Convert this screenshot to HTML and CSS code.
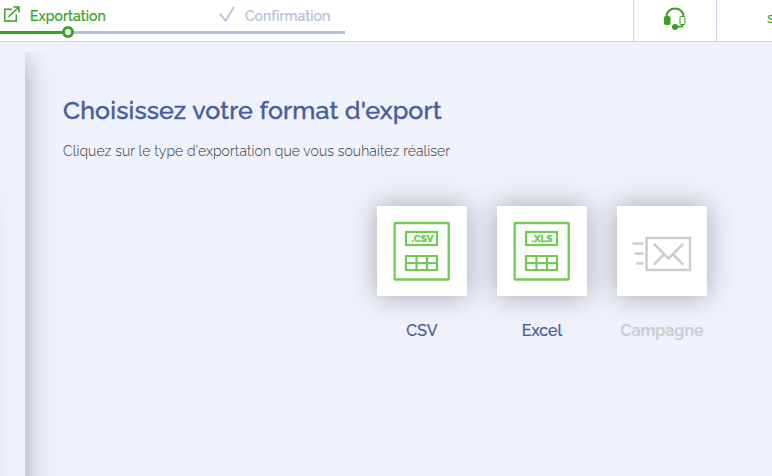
FILE: index.html
```
<!DOCTYPE html>
<html lang="fr">
<head>
<meta charset="utf-8">
<title>Exportation</title>
<link rel="stylesheet" href="styles.css">
</head>
<body>
<header class="topbar">
  <nav class="steps">
    <div class="step step-active">
      <svg class="step-icon" width="16" height="16" viewBox="0 0 16 16" fill="none" stroke="currentColor" stroke-width="1.500"><path d="M8 3.200H.8V15h11.500V8.500M4.500 10.800L14.500 1.500M9.500 1H15v5.500"/></svg>
      <span>Exportation</span>
      <i class="knob"></i>
    </div>
    <div class="step">
      <svg class="step-icon" width="16" height="16" viewBox="0 0 16 16" fill="none" stroke="currentColor" stroke-width="1.700"><path d="M.7 7.500L6.700 14.700L15 .7"/></svg>
      <span>Confirmation</span>
    </div>
  </nav>
  <div class="support">
    <svg width="24" height="24" viewBox="0 0 24 24" fill="none" stroke="currentColor"><path d="M3.500 10C3.500-1.500 20.500-1.500 20.500 10" stroke-width="2"/><rect x="1" y="9" width="6.500" height="9" rx="1.800" fill="currentColor" stroke="none"/><rect x="17" y="9.500" width="5" height="8" rx="1"/><path d="M19.500 17v1q0 1.700-2 1.700h-5" stroke-width="1.800"/><ellipse cx="12" cy="20" rx="3" ry="2.900" fill="currentColor" stroke="none"/></svg>
  </div>
  <div class="account">s</div>
</header>
<main class="workspace">
  <aside class="side"></aside>
  <section class="panel">
    <h1>Choisissez votre format d'export</h1>
    <p>Cliquez sur le type d'exportation que vous souhaitez réaliser</p>
    <div class="formats">
      <div class="format">
        <div class="tile"><svg width="90" height="90" viewBox="0 0 90 90" fill="none" stroke="#6fcc4f" stroke-width="2.200"><rect x="17.700" y="17" width="54" height="56.500" rx=".5" stroke-width="2.300"/><rect x="29" y="26" width="31" height="13"/><path d="M29 50h31v14H29zM29 57h31M39.500 50v14M50 50v14"/><text class="ext" x="34.500" y="36" textLength="22" lengthAdjust="spacingAndGlyphs">.CSV</text></svg></div>
        <span>CSV</span>
      </div>
      <div class="format">
        <div class="tile"><svg width="90" height="90" viewBox="0 0 90 90" fill="none" stroke="#6fcc4f" stroke-width="2.200"><rect x="17.700" y="17" width="54" height="56.500" rx=".5" stroke-width="2.300"/><rect x="29" y="26" width="31" height="13"/><path d="M29 50h31v14H29zM29 57h31M39.500 50v14M50 50v14"/><text class="ext" x="34.500" y="36" textLength="21" lengthAdjust="spacingAndGlyphs">.XLS</text></svg></div>
        <span>Excel</span>
      </div>
      <div class="format disabled">
        <div class="tile"><svg width="90" height="90" viewBox="0 0 90 90" fill="none" stroke="#cdcdcd" stroke-width="2.500" stroke-linecap="round" stroke-linejoin="round"><rect x="29.500" y="32" width="43.500" height="32"/><path d="M37.500 38.500L51.500 52.500L65.500 38.500M37.500 58L46.500 49M65.500 58L56.500 49M16.500 37.500h9M18.500 47.500h7M20.500 57.500h5"/></svg></div>
        <span>Campagne</span>
      </div>
    </div>
  </section>
</main>
</body>
</html>
```
FILE: styles.css
```
* { box-sizing: border-box; }
body {
  margin: 0;
  height: 476px;
  overflow: hidden;
  display: flex;
  flex-direction: column;
  background: #eff2fb;
  font-family: Raleway, Lato, sans-serif;
}
.topbar {
  height: 42px;
  flex: none;
  display: flex;
  background: #fff;
  border-bottom: 1px solid #c9d1e8;
}
.steps {
  width: 345px;
  height: 34px;
  margin-right: auto;
  display: grid;
  grid-template-columns: 215px 130px;
  border-bottom: 3px solid #b5c0df;
}
.step {
  display: flex;
  align-items: flex-start;
  gap: 10px;
  padding: 6px 0 0 4px;
  color: #b5c0df;
  font-size: 14px;
  line-height: 20px;
  font-weight: 500;
  letter-spacing: .05px;
  white-space: nowrap;
  -webkit-text-stroke: .2px currentColor;
}
.step-active {
  position: relative;
  color: #32a31b;
}
.step-active::after {
  content: "";
  position: absolute;
  left: 0;
  top: 31px;
  width: 68px;
  height: 3px;
  background: #32a31b;
}
.knob {
  position: absolute;
  z-index: 1;
  left: 62px;
  top: 26px;
  width: 12px;
  height: 12px;
  border: 3px solid #32a31b;
  border-radius: 50%;
  background: #fff;
}
.support {
  width: 84px;
  display: flex;
  justify-content: center;
  padding-top: 7px;
  border: solid #c9d1e8;
  border-width: 0 1px;
  color: #32a31b;
}
.account {
  width: 55px;
  padding: 8px 0 0 50px;
  font-size: 14px;
  line-height: 20px;
  font-weight: 500;
  color: #32a31b;
}
.workspace {
  flex: 1;
  display: flex;
  padding-top: 10px;
}
.side {
  width: 15px;
  margin: 118px 10px 0 0;
  background: linear-gradient(180deg, #eff2fb, transparent 60px), linear-gradient(90deg, #e9ecf5, #eff2fb 13px);
}
.panel {
  flex: 1;
  overflow: hidden;
  padding: 42px 0 0 38px;
  background:
    linear-gradient(180deg, rgba(239,242,251,.7), rgba(239,242,251,0) 30px),
    linear-gradient(90deg, #c7cad4 0, #ced1dc 4px, #dde0ea 10px, #e8ebf4 18px, #edf0f9 25px, #eff2fb 34px);
}
h1 {
  margin: 0;
  font-size: 25px;
  line-height: 32px;
  font-weight: 500;
  color: #465e9e;
  white-space: nowrap;
  letter-spacing: .15px;
  -webkit-text-stroke: .4px currentColor;
}
p {
  margin: 15px 0 0;
  font-size: 14px;
  line-height: 20px;
  font-weight: 300;
  color: #343440;
  letter-spacing: .09px;
  white-space: nowrap;
}
.formats {
  display: flex;
  gap: 30px;
  margin: 45px 0 0 314px;
}
.format {
  width: 90px;
  display: flex;
  flex-direction: column;
  align-items: center;
  gap: 25px;
  color: #465e9e;
  font-size: 16px;
  line-height: 20px;
  font-weight: 500;
  -webkit-text-stroke: .2px currentColor;
}
.disabled {
  color: #cbccce;
  font-weight: 600;
}
.tile {
  width: 90px;
  height: 90px;
  background: #fff;
  box-shadow: 0 0 25px rgba(60, 55, 70, .4);
}
.tile svg { display: block; }
.ext {
  font: 800 9.5px Raleway, "Open Sans", sans-serif;
  fill: #6fcc4f;
  stroke: #6fcc4f;
  stroke-width: .3px;
}
```
